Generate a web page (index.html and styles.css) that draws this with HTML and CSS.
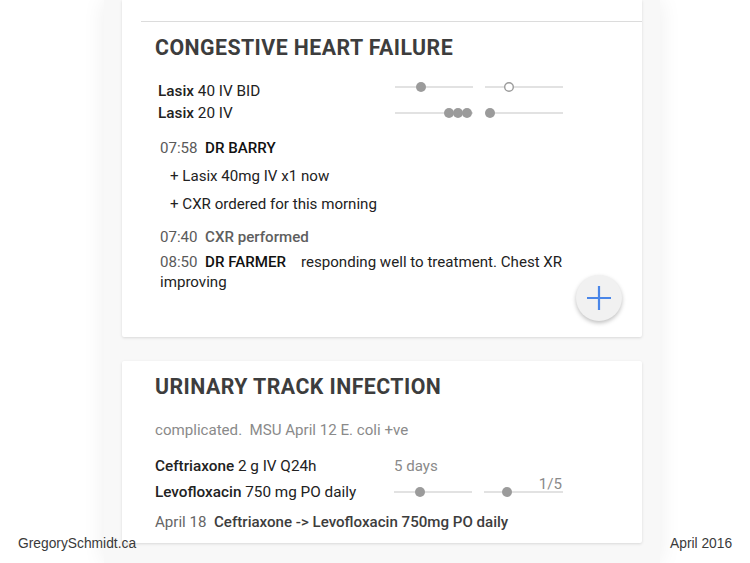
FILE: index.html
```html
<!DOCTYPE html>
<html>
<head>
<meta charset="utf-8">
<link rel="stylesheet" href="styles.css">
</head>
<body>
<div class="screen">
  <section class="card card-chf">
    <div class="card-body divided">
      <h2 class="title">CONGESTIVE HEART FAILURE</h2>
      <div class="meds meds-indent">
        <div class="med"><b>Lasix</b> 40 IV BID</div>
        <div class="slider slider-up">
          <svg width="78" height="12" viewBox="0 0 78 12"><line x1="0" y1="6" x2="78" y2="6" class="track"/><circle cx="26" cy="6" r="5" class="dot"/></svg>
        </div>
        <div class="slider slider-up">
          <svg width="78" height="12" viewBox="0 0 78 12"><line x1="0" y1="6" x2="78" y2="6" class="track"/><circle cx="24" cy="6" r="4.3" class="dot-open"/></svg>
        </div>
        <div class="med"><b>Lasix</b> 20 IV</div>
        <div class="slider">
          <svg width="78" height="12" viewBox="0 0 78 12"><line x1="0" y1="6" x2="78" y2="6" class="track"/><circle cx="54" cy="6" r="5" class="dot"/><circle cx="63" cy="6" r="5" class="dot"/><circle cx="72" cy="6" r="5" class="dot"/></svg>
        </div>
        <div class="slider">
          <svg width="78" height="12" viewBox="0 0 78 12"><line x1="0" y1="6" x2="78" y2="6" class="track"/><circle cx="5" cy="6" r="5" class="dot"/></svg>
        </div>
      </div>
      <div class="notes">
        <p class="note"><span class="time">07:58</span>&nbsp; <b>DR BARRY</b></p>
        <p class="note sub">+ Lasix 40mg IV x1 now</p>
        <p class="note sub">+ CXR ordered for this morning</p>
        <p class="note event"><span class="time">07:40</span>&nbsp; <span class="event-text">CXR performed</span></p>
        <p class="note"><span class="time">08:50</span>&nbsp; <b>DR FARMER</b><span class="note-text">responding well to treatment. Chest XR</span><br><span>improving</span></p>
      </div>
    </div>
    <button class="fab" aria-label="Add">
      <svg width="26" height="26" viewBox="0 0 26 26"><path d="M13 1V25M1 13H25" stroke="#4a86e8" stroke-width="2.2" fill="none"/></svg>
    </button>
  </section>

  <section class="card card-uti">
    <div class="card-body">
      <h2 class="title">URINARY TRACK INFECTION</h2>
      <p class="summary">complicated.&nbsp; MSU April 12 E. coli +ve</p>
      <div class="meds meds-uti">
        <div class="med"><b>Ceftriaxone</b> 2 g IV Q24h</div>
        <div class="duration">5 days</div>
        <div></div>
        <div class="med"><b>Levofloxacin</b> 750 mg PO daily</div>
        <div class="slider">
          <svg width="78" height="12" viewBox="0 0 78 12"><line x1="0" y1="6" x2="78" y2="6" class="track"/><circle cx="26" cy="6" r="5" class="dot"/></svg>
        </div>
        <div class="slider slider-count">
          <span class="count">1/5</span>
          <svg width="79" height="12" viewBox="0 0 79 12"><line x1="0" y1="6" x2="79" y2="6" class="track"/><circle cx="23" cy="6" r="5" class="dot"/></svg>
        </div>
      </div>
      <p class="change"><span class="time">April 18</span>&nbsp; <span class="change-text">Ceftriaxone -&gt; Levofloxacin 750mg PO daily</span></p>
    </div>
  </section>
</div>
<div class="caption caption-left">GregorySchmidt.ca</div>
<div class="caption caption-right">April 2016</div>
</body>
</html>
```

FILE: styles.css
```css
* { box-sizing: border-box; }
html, body { margin: 0; padding: 0; }
body {
  background: #ffffff;
  width: 750px;
  height: 563px;
  overflow: hidden;
  position: relative;
  font-family: Roboto, "Noto Sans", sans-serif;
  color: #222;
}
.screen {
  margin-left: 104px;
  width: 556px;
  height: 563px;
  background: #f8f8f8;
  box-shadow: 0 0 22px rgba(0, 0, 0, 0.07);
  padding: 0 18px;
  display: flex;
  flex-direction: column;
  gap: 24px;
}
.card {
  background: #fff;
  box-shadow: 0 1px 3px rgba(0, 0, 0, 0.13);
  border-radius: 2px;
  position: relative;
}
.card-chf {
  height: 337px;
  padding-top: 21px;
  border-radius: 0 0 2px 2px;
}
.card-uti {
  height: 182px;
}
.card-body {
  padding: 12px 33px 0 33px;
}
.divided {
  margin-left: 19px;
  padding-left: 14px;
  border-top: 1px solid #dcdcdc;
}
.title {
  margin: 0;
  font-size: 21.3px;
  line-height: 28px;
  font-weight: 700;
  color: #3d3d3d;
  letter-spacing: 0.45px;
}
.meds {
  display: grid;
  grid-template-columns: 225px 78px 78px;
  column-gap: 12px;
  align-items: center;
  font-size: 15.3px;
  line-height: 22px;
}
.meds-indent {
  margin-top: 18px;
  padding-left: 3px;
}
.med b { font-weight: 500; }
.slider { height: 22px; display: flex; align-items: center; }
.slider-up svg { position: relative; top: -4px; }
.slider svg { display: block; }
.track { stroke: #c6c6c6; stroke-width: 1.2; }
.dot { fill: #9b9b9b; }
.dot-open { fill: #fff; stroke: #9b9b9b; stroke-width: 1.4; }
.notes {
  margin-top: 14px;
  padding-left: 5px;
  font-size: 15.1px;
  line-height: 20px;
}
.note { margin: 0 0 8px 0; color: #222; }
.note b { font-weight: 500; color: #111; }
.note-text { margin-left: 15px; }
.note.sub { padding-left: 10px; }
.note.event { margin-top: 13px; margin-bottom: 5px; }
.time { color: #5a5a5a; }
.event-text { color: #5e5e5e; font-weight: 500; }
.fab {
  position: absolute;
  left: 454px;
  top: 275px;
  width: 46px;
  height: 46px;
  border-radius: 50%;
  border: none;
  background: #f1f1f1;
  box-shadow: 0 2px 4px rgba(0, 0, 0, 0.25);
  display: flex;
  align-items: center;
  justify-content: center;
  padding: 0;
}
.summary {
  margin: 18px 0 0 0;
  font-size: 15.1px;
  line-height: 22px;
  color: #8a8a8a;
}
.meds-uti {
  margin-top: 14px;
  grid-template-columns: 227px 78px 79px;
  row-gap: 4px;
  line-height: 22px;
}
.duration { color: #8a8a8a; font-size: 15.1px; }
.slider-count { position: relative; }
.count {
  position: absolute;
  right: 1px;
  top: -6px;
  font-size: 15.1px;
  color: #8a8a8a;
  line-height: 18px;
}
.change {
  margin: 8px 0 0 0;
  font-size: 15.1px;
  line-height: 22px;
}
.change .time { color: #666; }
.change-text { font-weight: 500; color: #3d3d3d; }
.caption {
  position: absolute;
  top: 535px;
  font-family: "Liberation Sans", Arial, sans-serif;
  font-size: 13.8px;
  line-height: 18px;
  color: #3a3a3a;
}
.caption-left { left: 18px; }
.caption-right { left: 670px; }
```
